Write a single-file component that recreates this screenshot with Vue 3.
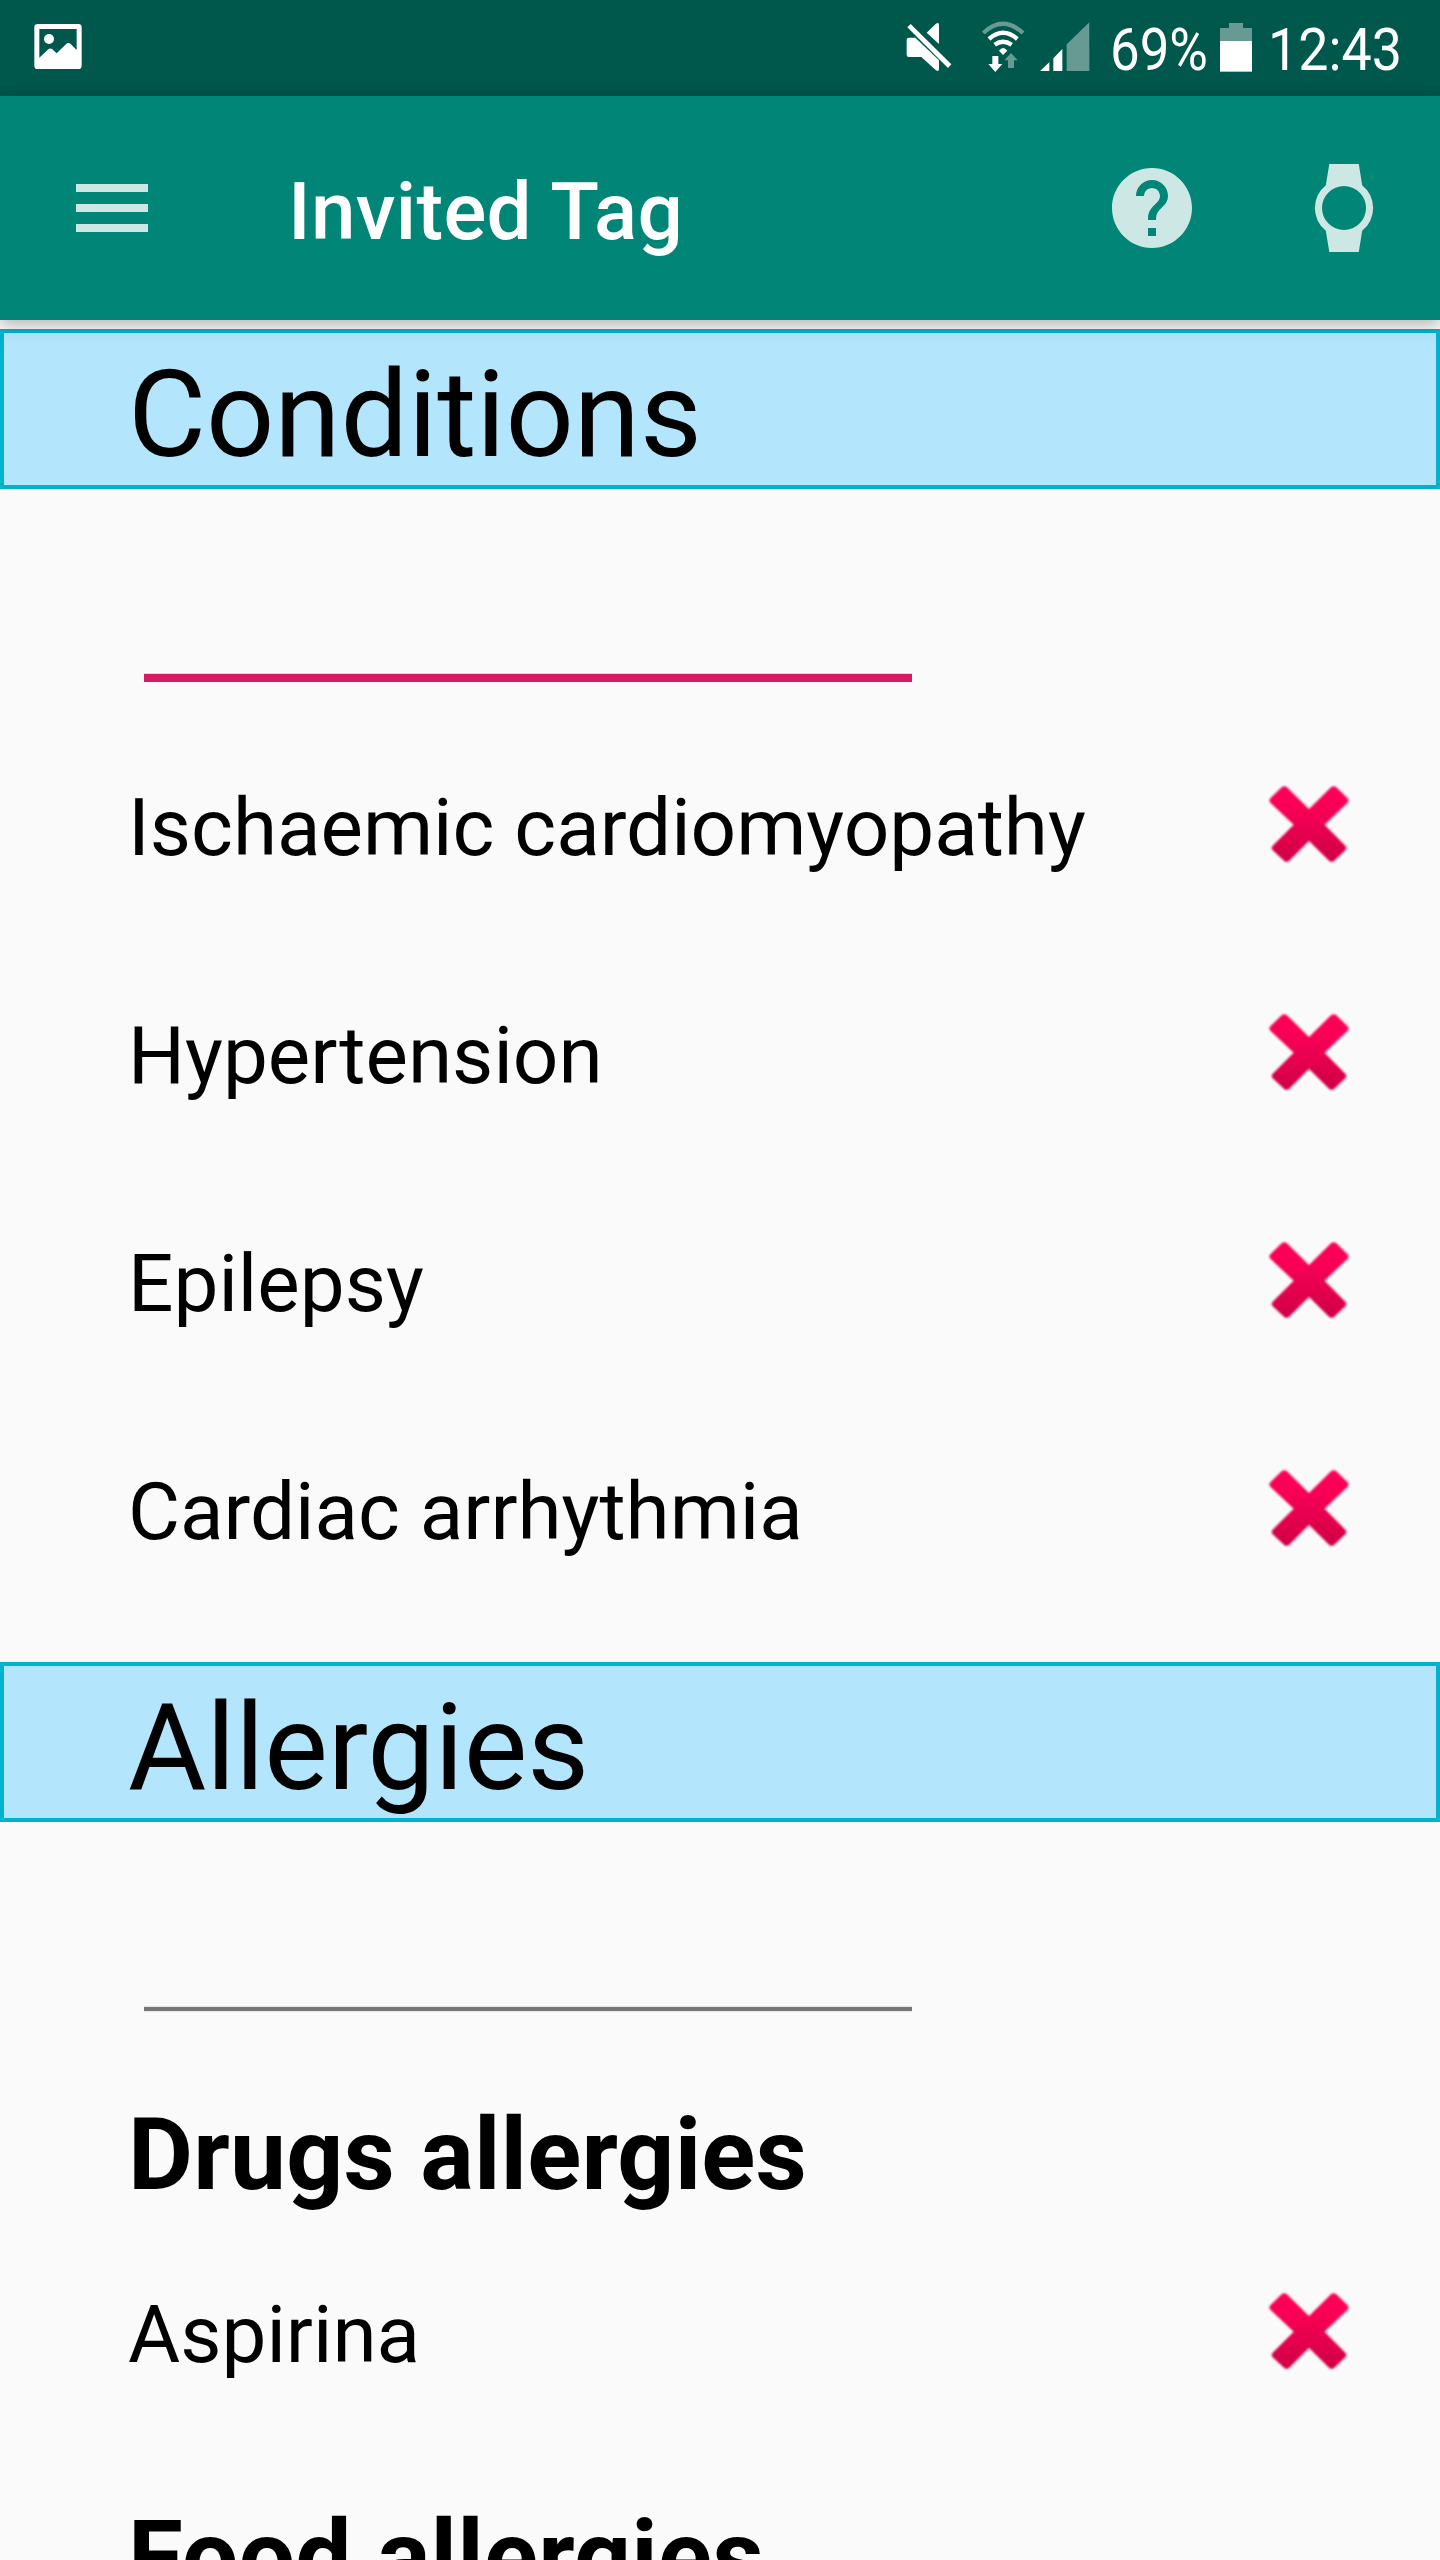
<script setup>
const conditions = ['Ischaemic cardiomyopathy', 'Hypertension', 'Epilepsy', 'Cardiac arrhythmia']
const sections = [
  { title: 'Conditions', focused: true, groups: [{ items: conditions }] },
  {
    title: 'Allergies',
    focused: false,
    groups: [
      { name: 'Drugs allergies', items: ['Aspirina'] },
      { name: 'Food allergies', items: [] },
    ],
  },
]
</script>

<template>
  <div class="screen">
    <svg width="0" height="0" aria-hidden="true">
      <defs>
        <linearGradient id="crossFill" x1="0" y1="0" x2="0" y2="1">
          <stop offset="0" stop-color="#ff0058" />
          <stop offset="0.3" stop-color="#f80055" />
          <stop offset="1" stop-color="#cf0046" />
        </linearGradient>
      </defs>
    </svg>

    <div class="status">
      <svg width="48" height="96" viewBox="102 0 144 288">
        <path fill="#fff" fill-rule="evenodd" d="M113 72H235Q245 72 245 82V197Q245 207 235 207H113Q103 207 103 197V82Q103 72 113 72ZM118 87V173L145 148Q151 143 157 148L170 160L198 133Q205 126 212 132L230 150V87Z" />
        <circle cx="147" cy="117" r="15" fill="#fff" />
      </svg>
      <span class="spacer"></span>
      <svg width="46" height="96" viewBox="79 0 138 288" fill="#fff">
        <path d="M141 98L168 72Q178 64 178 76V132Z" />
        <path d="M81 120Q81 113 88 113H107L178 181V206Q178 218 168 210L125 171H88Q81 171 81 164Z" />
        <path d="M83 82L93 72L215 193L205 204Z" />
      </svg>
      <svg class="wifi" width="44" height="96" viewBox="304 0 132 288" fill="none">
        <path d="M311 99Q370 44 430 99" stroke="#669a93" stroke-width="13" />
        <path d="M328 117Q370 80 413 117" stroke="#fff" stroke-width="13" />
        <path d="M345 134Q370 116 396 134" stroke="#fff" stroke-width="13" />
        <path d="M358 152Q370 136 383 152L370 165Z" fill="#fff" />
        <path d="M338 168H356V192H368L347 216L326 192H338Z" fill="#fff" />
        <path d="M385 204H403V181H414L394 159L374 181H385Z" fill="#669a93" />
      </svg>
      <svg class="signal" width="50" height="96" viewBox="482 0 150 288">
        <path fill="#fff" d="M482 213L510 187V213ZM522 175L549 147V213H522Z" />
        <path fill="#669a93" d="M562 133L630 67V213H562Z" />
      </svg>
      <svg class="percent" width="110" height="96" fill="#fff">
        <text x="5" y="70" textLength="98" lengthAdjust="spacingAndGlyphs">69%</text>
      </svg>
      <svg class="battery" width="32" height="96" viewBox="360 0 96 288">
        <path fill="#669a93" d="M360 84H387V69H429V84H456V124H360Z" />
        <path fill="#fff" d="M360 123H456V215H360Z" />
      </svg>
      <svg class="clock" width="146" height="96" fill="#fff">
        <text x="4" y="70" textLength="134" lengthAdjust="spacingAndGlyphs">12:43</text>
      </svg>
    </div>

    <header class="appbar">
      <svg width="96" height="96" viewBox="0 0 24 24"><path d="M3 18h18v-2H3v2zm0-5h18v-2H3v2zm0-7v2h18V6H3z" /></svg>
      <h1>Invited Tag</h1>
      <svg width="96" height="96" viewBox="0 0 24 24"><path d="M12 2C6.48 2 2 6.48 2 12s4.480 10 10 10 10-4.480 10-10S17.520 2 12 2zm1 17h-2v-2h2v2zm2.070-7.750l-.9.920C13.450 12.900 13 13.500 13 15h-2v-.5c0-1.100.450-2.100 1.170-2.830l1.240-1.260c.370-.360.590-.860.590-1.410 0-1.100-.9-2-2-2s-2 .9-2 2H8c0-2.210 1.790-4 4-4s4 1.790 4 4c0 .880-.360 1.680-.930 2.250z" /></svg>
      <svg class="watch" width="96" height="96" viewBox="0 0 96 96">
        <path fill-rule="evenodd" d="M33.300 4H62.800L66.200 25.200A29.200 29.200 0 0 1 66.200 70.800L62.800 92H33.300L29.800 70.800A29.200 29.200 0 0 1 29.800 25.200ZM48 26A22 22 0 1 0 48 70A22 22 0 1 0 48 26Z" />
      </svg>
    </header>

    <main>
      <section v-for="section in sections" :key="section.title">
        <h2>{{ section.title }}</h2>
        <div class="field" :class="{ focused: section.focused }"><div class="underline"></div></div>
        <template v-for="(group, g) in section.groups" :key="g">
          <h3 v-if="group.name">{{ group.name }}</h3>
          <div v-for="item in group.items" :key="item" class="row">
            <span>{{ item }}</span>
            <svg class="cross" width="140" height="130" viewBox="0 0 420 390">
              <path fill="url(#crossFill)" d="M125 82Q133 75 141 82L207 147L273 82Q281 75 289 82L323 115Q329 122 323 128L254 194L316 257Q322 264 316 271L283 302Q275 309 267 302L207 243L148 302Q140 309 132 302L98 271Q92 264 98 257L161 194L91 128Q85 122 91 115Z" />
            </svg>
          </div>
        </template>
      </section>
    </main>
  </div>
</template>

<style>
body {
  background: #fafafa;
}
</style>

<style scoped>
.screen {
  display: flex;
  flex-direction: column;
  width: 1440px;
  height: 2560px;
  overflow: hidden;
  background: #fafafa;
  color: #000;
  font-family: Roboto, "Liberation Sans", sans-serif;
}
svg {
  display: block;
  flex: none;
}
.status {
  display: flex;
  flex: none;
  box-sizing: border-box;
  height: 96px;
  padding: 0 30px 0 34px;
  background: #00574b;
}
.status text {
  font-size: 60px;
}
.spacer {
  flex: 1;
}
.wifi {
  margin-left: 29px;
}
.signal {
  margin-left: 15px;
}
.percent {
  margin-left: 15px;
}
.battery {
  margin-left: 5px;
}
.clock {
  margin-left: 12px;
}
.appbar {
  position: relative;
  z-index: 1;
  display: flex;
  flex: none;
  align-items: center;
  box-sizing: border-box;
  height: 224px;
  padding: 0 48px 0 64px;
  background: #008577;
  box-shadow: 0 4px 16px rgba(0, 0, 0, 0.3);
}
.appbar svg {
  fill: #cce7e4;
}
.appbar .watch {
  margin-left: 96px;
}
h1 {
  flex: 1;
  margin: 8px 0 0 128px;
  color: #fff;
  font-size: 80px;
  font-weight: 500;
  line-height: 96px;
  letter-spacing: 0.3px;
}
main {
  flex: none;
  padding-top: 9px;
}
section {
  padding-bottom: 36px;
}
h2 {
  box-sizing: border-box;
  height: 160px;
  margin: 0;
  padding-left: 124px;
  border: 4px solid #00b2cc;
  background: #b3e5fc;
  font-size: 120px;
  font-weight: 400;
  line-height: 164px;
  letter-spacing: -0.1px;
}
.field {
  display: flex;
  align-items: flex-start;
  box-sizing: border-box;
  height: 225px;
  padding: 185px 0 0 144px;
}
.underline {
  width: 768px;
  height: 4px;
  background: #767676;
  box-shadow: 0 -1px #e6e6e6, 0 1px #e6e6e6;
}
.focused .underline {
  height: 8px;
  background: #d81b60;
  box-shadow: 0 -1px #f3cfdc;
}
h3 {
  margin: 48px 0 6px;
  padding-left: 128px;
  font-size: 100px;
  font-weight: 700;
  line-height: 120px;
  letter-spacing: 0.2px;
}
.row {
  display: flex;
  justify-content: space-between;
  height: 228px;
  padding: 0 60px 0 128px;
  font-size: 80px;
  line-height: 228px;
}
.cross {
  margin-top: 46px;
  filter: blur(0.8px);
}
</style>
